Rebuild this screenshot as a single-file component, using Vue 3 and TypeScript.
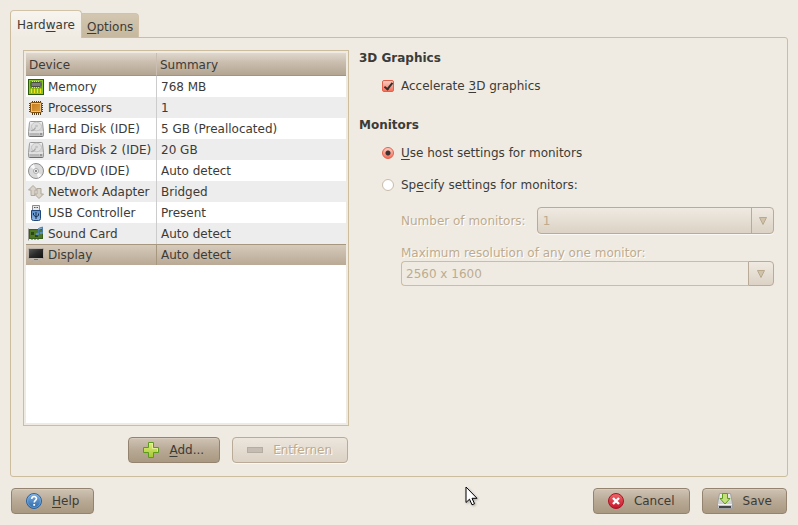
<script setup lang="ts">
import { ref } from 'vue'

type IconName = 'memory' | 'cpu' | 'disk' | 'disc' | 'network' | 'usb' | 'sound' | 'display'

interface Device {
  icon: IconName
  name: string
  summary: string
}

const devices: Device[] = [
  { icon: 'memory', name: 'Memory', summary: '768 MB' },
  { icon: 'cpu', name: 'Processors', summary: '1' },
  { icon: 'disk', name: 'Hard Disk (IDE)', summary: '5 GB (Preallocated)' },
  { icon: 'disk', name: 'Hard Disk 2 (IDE)', summary: '20 GB' },
  { icon: 'disc', name: 'CD/DVD (IDE)', summary: 'Auto detect' },
  { icon: 'network', name: 'Network Adapter', summary: 'Bridged' },
  { icon: 'usb', name: 'USB Controller', summary: 'Present' },
  { icon: 'sound', name: 'Sound Card', summary: 'Auto detect' },
  { icon: 'display', name: 'Display', summary: 'Auto detect' },
]

const selected = ref(8)
const accelerate = ref(true)
const monitorMode = ref<'host' | 'custom'>('host')
const resolution = ref('2560 x 1600')
</script>

<template>
  <main class="dialog">
    <svg class="defs" width="0" height="0" aria-hidden="true">
      <defs>
        <linearGradient id="g-metal" x1="0" y1="0" x2="0" y2="1">
          <stop offset="0" stop-color="#f0f0f0" />
          <stop offset="1" stop-color="#bcbcbc" />
        </linearGradient>
        <linearGradient id="g-blue" x1="0" y1="0" x2="0" y2="1">
          <stop offset="0" stop-color="#7fb0e2" />
          <stop offset="1" stop-color="#2a68aa" />
        </linearGradient>
        <linearGradient id="g-usb" x1="0" y1="0" x2="0" y2="1">
          <stop offset="0" stop-color="#5b8cc6" />
          <stop offset="1" stop-color="#8fb8e4" />
        </linearGradient>
        <linearGradient id="g-red" x1="0" y1="0" x2="0" y2="1">
          <stop offset="0" stop-color="#ee6a6a" />
          <stop offset="1" stop-color="#c4122a" />
        </linearGradient>
        <linearGradient id="g-screen" x1="0" y1="0" x2="1" y2="1">
          <stop offset="0" stop-color="#5c5c5c" />
          <stop offset="0.5" stop-color="#2a2a2a" />
          <stop offset="1" stop-color="#101010" />
        </linearGradient>
        <linearGradient id="g-green" x1="0" y1="0" x2="0" y2="1">
          <stop offset="0" stop-color="#e2ee7a" />
          <stop offset="1" stop-color="#a2c832" />
        </linearGradient>
        <linearGradient id="g-chip" x1="0" y1="0" x2="1" y2="1">
          <stop offset="0" stop-color="#c07818" />
          <stop offset="1" stop-color="#e2a244" />
        </linearGradient>
      </defs>
    </svg>

    <div class="tabs" role="tablist">
      <button class="tab active" role="tab" aria-selected="true">Hard<u>w</u>are</button>
      <button class="tab" role="tab" aria-selected="false"><u>O</u>ptions</button>
    </div>

    <div class="panel">
      <section class="devices">
        <div class="tree">
          <div class="tree-body">
            <table>
              <colgroup>
                <col class="col-device" />
                <col />
              </colgroup>
              <thead>
                <tr>
                  <th>Device</th>
                  <th>Summary</th>
                </tr>
              </thead>
              <tbody>
                <tr
                  v-for="(d, i) in devices"
                  :key="d.name"
                  :class="{ selected: i === selected }"
                  @click="selected = i"
                >
                  <td>
                    <span class="cell">
                      <svg class="icon" viewBox="0 0 16 16" aria-hidden="true">
                        <g v-if="d.icon === 'memory'">
                          <rect x="0.5" y="0.5" width="15" height="15" fill="#5c9e0e" stroke="#2a5a0a" />
                          <rect x="1.5" y="1.5" width="13" height="13" fill="none" stroke="#8cc828" />
                          <path d="M3.500 14V9.500M6.500 14V9.500M9.500 14V9.500M12.500 14V9.500" stroke="#f4e41c" stroke-width="1.800" />
                          <path d="M4.500 2v7M6.500 2v7M8.500 2v7M10.500 2v7M12.500 3v5" stroke="#d8dcd0" />
                          <rect x="3" y="3.500" width="10" height="4" rx="1" fill="#7a7e76" stroke="#4a4c46" />
                        </g>
                        <g v-else-if="d.icon === 'cpu'">
                          <path d="M4.500 1v14M6.500 1v14M8.500 1v14M10.500 1v14M12.500 1v14M1 3.500h14M1 5.500h14M1 7.500h14M1 9.500h14M1 11.500h14" stroke="#4a4232" />
                          <rect x="2.500" y="2.500" width="11" height="10" rx="1" fill="url(#g-chip)" stroke="#83500c" />
                          <rect x="3.500" y="3.500" width="9" height="8" fill="none" stroke="#eec27c" />
                        </g>
                        <g v-else-if="d.icon === 'disk'">
                          <path d="M2.500 0.500h11a1 1 0 0 1 1 1l1 9v4a1 1 0 0 1-1 1h-13a1 1 0 0 1-1-1v-4l1-9a1 1 0 0 1 1-1z" fill="url(#g-metal)" stroke="#9a9a9a" />
                          <path d="M1 11h14" stroke="#f6f6f6" />
                          <ellipse cx="8.500" cy="5.500" rx="5" ry="4.300" fill="#dedede" stroke="#bcbcbc" stroke-width=".8" />
                          <ellipse cx="8.500" cy="5" rx="1.500" ry="1.200" fill="#c4c4c4" />
                          <path d="M3 9.500q3 .5 4.500-3" fill="none" stroke="#a8a8a8" stroke-width="1.200" />
                          <path d="M2 13h9" stroke="#a8a8a8" />
                          <path d="M12 13h2" stroke="#666" />
                          <path d="M1.500 15.500h13" stroke="#6e6e6e" />
                        </g>
                        <g v-else-if="d.icon === 'disc'">
                          <circle cx="8" cy="8" r="7.500" fill="#dadada" stroke="#8e8e8e" />
                          <path d="M8 8L2.500 4A7 7 0 0 1 6 1.300zM8 8l5.500 4a7 7 0 0 1-3.500 2.700z" fill="#f8f8f8" />
                          <circle cx="8" cy="8" r="2.500" fill="#f4f4f4" stroke="#aaa" />
                          <circle cx="8" cy="8" r="1" fill="#666" />
                        </g>
                        <g v-else-if="d.icon === 'network'" fill="#d8d2c8" stroke="#b0a89c">
                          <path d="M5 1.500L9.500 6H7v5.500H3V6H.5z" />
                          <path d="M11 14.500L6.500 10H9V4.500h4V10h2.500z" />
                        </g>
                        <g v-else-if="d.icon === 'usb'">
                          <path d="M4.500 5.500v-5h7v5" fill="#e8e8e8" stroke="#8a8a8a" />
                          <path d="M6 2.500h1.500M8.500 2.500H10" stroke="#555" />
                          <path d="M3.500 5.500h9v8a2 2 0 0 1-2 2h-5a2 2 0 0 1-2-2z" fill="url(#g-usb)" stroke="#20487c" />
                          <path d="M8 7v7M5.500 8v2l2.500 2 2.500-1.500V8.500" fill="none" stroke="#152c50" />
                        </g>
                        <g v-else-if="d.icon === 'sound'">
                          <path d="M0.500 2.500v12" stroke="#9a9a90" />
                          <rect x="1.500" y="3.500" width="13" height="9" fill="#4e7828" stroke="#3a5e1c" />
                          <path d="M3 13.500h9" stroke="#b8a040" stroke-dasharray="2 1" />
                          <rect x="3" y="6" width="3" height="3" fill="#2a4612" />
                          <rect x="7" y="9" width="3" height="2" fill="#2a4612" />
                          <path d="M10.500 8V2.500l4-1.500v6" fill="none" stroke="#4878a4" />
                          <path d="M10.500 3.500l4-1.500" stroke="#6c9cc4" />
                          <ellipse cx="9.300" cy="8" rx="1.700" ry="1.300" fill="#5c90b8" />
                          <ellipse cx="13.300" cy="7" rx="1.700" ry="1.300" fill="#5c90b8" />
                        </g>
                        <g v-else>
                          <rect x="0.500" y="1.500" width="15" height="10" rx="1" fill="url(#g-screen)" stroke="#b8b2aa" />
                          <path d="M6 12h4v1H6z" fill="#777" />
                          <path d="M4.500 13.500h7l.5 1H4z" fill="#eceae6" stroke="#9a948c" stroke-width=".5" />
                        </g>
                      </svg>
                      {{ d.name }}
                    </span>
                  </td>
                  <td>{{ d.summary }}</td>
                </tr>
              </tbody>
            </table>
          </div>
        </div>
        <div class="actions">
          <button class="btn">
            <svg class="icon" viewBox="0 0 16 16" aria-hidden="true">
              <path d="M5.500 .5h5v5h5v5h-5v5h-5v-5h-5v-5h5z" fill="url(#g-green)" stroke="#5c9a1e" />
              <path d="M6.500 1.500h3v5h5v3" fill="none" stroke="#edf5a8" opacity=".7" />
            </svg>
            <span><u>A</u>dd...</span>
          </button>
          <button class="btn" disabled>
            <svg class="icon" viewBox="0 0 16 16" aria-hidden="true">
              <rect x="0.500" y="5.500" width="15" height="5" fill="#c5bdb4" stroke="#b5aca2" />
            </svg>
            <span>Entfernen</span>
          </button>
        </div>
      </section>

      <section class="settings">
        <h2>3D Graphics</h2>
        <label class="option">
          <input v-model="accelerate" type="checkbox" />
          <span>Accelerate <u>3</u>D graphics</span>
        </label>

        <h2 class="second">Monitors</h2>
        <label class="option">
          <input v-model="monitorMode" type="radio" name="monitors" value="host" />
          <span><u>U</u>se host settings for monitors</span>
        </label>
        <label class="option spaced">
          <input v-model="monitorMode" type="radio" name="monitors" value="custom" />
          <span>Sp<u>e</u>cify settings for monitors:</span>
        </label>

        <div class="custom">
          <div class="count-row">
            <label for="count">Number of monitors:</label>
            <div class="select-wrap">
              <select id="count" :disabled="monitorMode === 'host'">
                <option>1</option>
              </select>
              <span class="drop">
                <svg class="arrow" viewBox="0 0 8 8" aria-hidden="true"><path d="M.5 .5h7L4 7.500z" /></svg>
              </span>
            </div>
          </div>
          <label class="res-label" for="resolution">Maximum resolution of any one monitor:</label>
          <div class="combo">
            <input id="resolution" v-model="resolution" type="text" :disabled="monitorMode === 'host'" />
            <button type="button" aria-label="Resolutions" :disabled="monitorMode === 'host'">
              <svg class="arrow" viewBox="0 0 8 8" aria-hidden="true"><path d="M.5 .5h7L4 7.500z" /></svg>
            </button>
          </div>
        </div>
      </section>
    </div>

    <footer class="footer">
      <button class="btn">
        <svg class="icon" viewBox="0 0 16 16" aria-hidden="true">
          <circle cx="8" cy="8" r="7.500" fill="url(#g-blue)" stroke="#2c629c" />
          <circle cx="8" cy="8" r="6.500" fill="none" stroke="#8fbbe6" opacity=".5" />
          <path d="M5.700 6c0-3.200 4.800-3.200 4.800-.4 0 1.700-2.300 1.900-2.300 4" fill="none" stroke="#fff" stroke-width="1.600" />
          <rect x="7.300" y="11" width="1.800" height="1.800" fill="#fff" />
        </svg>
        <span><u>H</u>elp</span>
      </button>
      <span class="fill"></span>
      <button class="btn">
        <svg class="icon" viewBox="0 0 16 16" aria-hidden="true">
          <circle cx="8" cy="8" r="7.500" fill="url(#g-red)" stroke="#a81626" />
          <path d="M5 5l6 6M11 5l-6 6" stroke="#fff" stroke-width="2.400" />
        </svg>
        <span>Cancel</span>
      </button>
      <button class="btn">
        <svg class="icon" viewBox="0 0 16 16" aria-hidden="true">
          <path d="M2.500 .5h11l2 10v5H.5v-5z" fill="url(#g-metal)" stroke="#a0a0a0" />
          <path d="M1 11.500h14" stroke="#f2f2f2" />
          <path d="M2 14h12" stroke="#444" stroke-width="2" />
          <path d="M5.500 .5h5v5H13l-5 5.500-5-5.500h2.500z" fill="#c5e07a" stroke="#5e9a1e" />
        </svg>
        <span>Save</span>
      </button>
    </footer>

    <svg class="pointer" viewBox="0 0 13 20" aria-hidden="true">
      <path d="M1 1v15.500l3.500-3.300 2.500 5.600 2.500-1.100-2.500-5.400h5z" fill="#fff" stroke="#000" />
    </svg>
  </main>
</template>

<style>
body {
  background: #efebe3;
}
</style>

<style scoped>
.dialog {
  position: relative;
  box-sizing: border-box;
  min-height: 100vh;
  padding: 10px 10px 11px;
  display: flex;
  flex-direction: column;
  color: #3c3b37;
  background: #efebe3;
  font: 12px/16px "DejaVu Sans", sans-serif;
}

.dialog button,
.dialog input,
.dialog select {
  font: inherit;
  color: inherit;
}

u {
  text-decoration: underline;
  text-underline-offset: 2px;
}

.defs {
  position: absolute;
}

.icon {
  display: block;
  flex: none;
  width: 16px;
  height: 16px;
}

.tabs {
  display: flex;
  align-items: flex-end;
  height: 27px;
}

.tab {
  box-sizing: border-box;
  height: 24px;
  padding: 2px 5px 0;
  border: 1px solid #d2c3a8;
  border-left: 0;
  border-bottom: 0;
  border-radius: 0 4px 0 0;
  background: linear-gradient(#d3c7b1, #c5b89f);
}

.tab.active {
  position: relative;
  z-index: 1;
  height: 28px;
  margin-bottom: -1px;
  padding: 1px 6px 0;
  border-left: 1px solid #cdbd9f;
  border-radius: 4px 4px 0 0;
  background: linear-gradient(#f7f4ef, #efebe3);
}

.panel {
  flex: 1;
  display: flex;
  gap: 10px;
  padding: 12px 13px 13px 12px;
  border: 1px solid #cdbd9f;
  border-radius: 0 3px 3px 3px;
}

.devices {
  flex: none;
  width: 326px;
  display: flex;
  flex-direction: column;
}

.tree {
  flex: 1;
  padding: 2px;
  border: 1px solid #cdbd9f;
  display: flex;
}

.tree-body {
  flex: 1;
  background: #fff;
}

table {
  width: 100%;
  table-layout: fixed;
  border-collapse: separate;
  border-spacing: 0;
}

.col-device {
  width: 131px;
}

th {
  height: 23px;
  box-sizing: border-box;
  padding: 2px 3px 0;
  text-align: left;
  font-weight: normal;
  background: linear-gradient(#e0d8ce, #cbbfb0 40%, #b3a592);
  border-bottom: 1px solid #a3937f;
}

th:first-child {
  border-right: 1px solid #c9beb1;
}

td {
  height: 21px;
  box-sizing: border-box;
  padding: 0 0 0 4px;
  white-space: nowrap;
}

td:first-child {
  padding-left: 2px;
  border-right: 1px solid #cccccc;
}

tbody tr:nth-child(even) td {
  background: #ededed;
}

tbody tr.selected td {
  background: linear-gradient(#d6cabb, #b9a995);
  border-top: 1px solid #a8977f;
}

tbody tr.selected td:first-child {
  border-right-color: #a8977f;
}

.cell {
  display: flex;
  align-items: center;
  gap: 4px;
}

.actions {
  display: flex;
  justify-content: flex-end;
  gap: 12px;
  padding: 11px 1px 0 0;
}

.btn {
  box-sizing: border-box;
  height: 26px;
  padding: 0 14px;
  display: flex;
  align-items: center;
  gap: 10px;
  border: 1px solid #94836f;
  border-radius: 4px;
  background: linear-gradient(#cfc3b4, #b8a995 50%, #a99982);
  box-shadow: inset 0 1px #d6cbbd;
}

.actions .btn {
  padding-right: 15px;
}

.btn:disabled {
  border-color: #b9ab98;
  background: linear-gradient(#ece6dd, #dcd2c5);
  box-shadow: 0 1px #faf8f5;
}

.dialog .btn:disabled {
  color: #bdab8f;
  text-shadow: 1px 1px #fff;
}

.settings {
  flex: 1;
  min-width: 0;
  padding-top: 1px;
}

h2 {
  margin: 0;
  font-size: 12px;
  line-height: 14px;
  font-weight: bold;
}

h2.second {
  margin-top: 24px;
}

.option {
  display: flex;
  align-items: center;
  gap: 7px;
  margin: 13px 0 0 23px;
}

.option.spaced {
  margin-top: 16px;
}

.option input {
  appearance: none;
  box-sizing: border-box;
  flex: none;
  width: 12px;
  height: 12px;
  margin: 0;
  border: 1px solid #c9bba8;
  border-radius: 50%;
  background: #fff;
}

.option input[type='checkbox'] {
  border-radius: 2px;
}

.option input:checked {
  border-color: #e2614a;
}

.option input[type='radio']:checked {
  background: radial-gradient(circle, #3c3030 2px, transparent 3px), linear-gradient(#fbccc2, #f4715a);
}

.option input[type='checkbox']:checked {
  display: grid;
  background: linear-gradient(#fbccc2, #f4715a);
}

.option input[type='checkbox']:checked::before {
  content: "";
  width: 3px;
  height: 7px;
  margin: 0 0 0 3px;
  border: solid #33302c;
  border-width: 0 2px 2px 0;
  transform: rotate(38deg);
  box-sizing: content-box;
}

.custom {
  margin: 14px 0 0 42px;
  color: #bdab8f;
  text-shadow: 1px 1px #fff;
}

.count-row {
  display: flex;
  align-items: center;
  gap: 11px;
}

.select-wrap {
  position: relative;
  flex: 1;
}

select {
  appearance: none;
  box-sizing: border-box;
  display: block;
  width: 100%;
  height: 27px;
  padding: 0 28px 0 5px;
  border: 1px solid #b9ab98;
  border-radius: 4px;
  opacity: 1;
  background: linear-gradient(#efeae2, #dcd2c5);
  box-shadow: 0 1px #faf8f5;
}

.drop {
  position: absolute;
  inset: 1px 1px 1px auto;
  width: 21px;
  display: grid;
  place-items: center;
  border-left: 1px solid #b9ab98;
  pointer-events: none;
}

.arrow {
  width: 8px;
  height: 8px;
  fill: #cfc3ad;
  stroke: #b9a98c;
}

.res-label {
  display: block;
  margin-top: 11px;
}

.combo {
  display: flex;
  height: 25px;
}

.combo input {
  box-sizing: border-box;
  flex: 1;
  min-width: 0;
  padding: 0 4px;
  border: 1px solid #cdbd9f;
  border-right: 0;
  border-radius: 4px 0 0 4px;
  background: transparent;
}

.combo button {
  box-sizing: border-box;
  width: 26px;
  padding: 0;
  display: grid;
  place-items: center;
  border: 1px solid #b9ab98;
  border-radius: 0 4px 4px 0;
  background: linear-gradient(#efeae2, #dcd2c5);
}

.footer {
  display: flex;
  gap: 12px;
  padding: 11px 1px 0;
}

.fill {
  flex: 1;
}

.pointer {
  position: absolute;
  left: 465px;
  top: 486px;
  width: 13px;
  height: 20px;
  filter: drop-shadow(1px 1px 1px rgba(0, 0, 0, 0.3));
}
</style>
